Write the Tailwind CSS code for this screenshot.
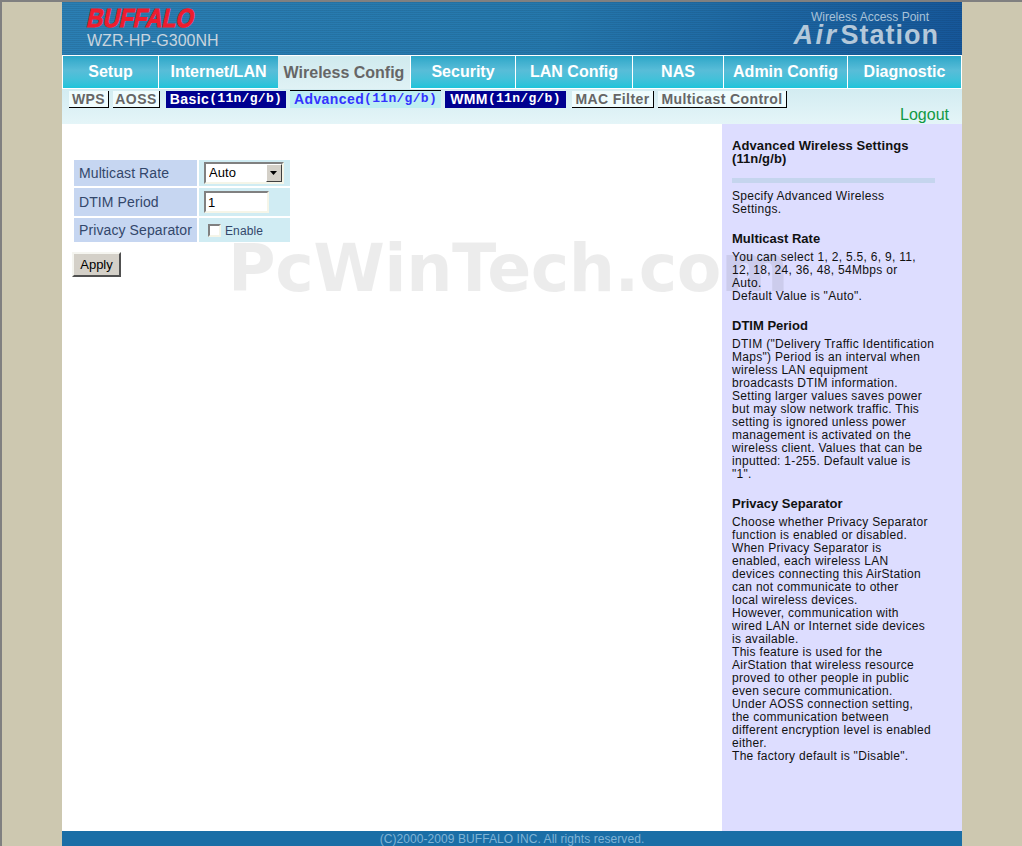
<!DOCTYPE html>
<html lang="en">
<head>
    <meta charset="UTF-8">
    <meta name="viewport" content="width=device-width, initial-scale=1.0">
    <title>AirStation - Advanced Wireless Settings</title>
    <script src="https://cdn.jsdelivr.net/npm/@tailwindcss/browser@4"></script>
</head>
<body class="bg-[#cdc8b0] font-['Liberation_Sans',Arial,sans-serif]">
    <div class="relative h-[846px] overflow-hidden border-t-2 border-l-2 border-[#808080] pl-[60px]">
        <div class="flex h-[844px] w-[900px] flex-col bg-white">

            <!-- Header -->
            <div class="flex h-[53px] justify-between bg-[image:repeating-linear-gradient(0deg,rgba(0,0,0,0.08)_0px,rgba(0,0,0,0.08)_1px,transparent_1px,transparent_2px),linear-gradient(100deg,#2b7fb4,#2578ad_55%,#16579a)]">
                <div class="pl-[26px] pt-[3px]">
                    <div class="h-[24px] origin-left -skew-x-[14deg] scale-x-[0.87] text-[26px] leading-[26px] font-bold text-[#ee1c2e] [-webkit-text-stroke:1px_#ee1c2e]">BUFFALO</div>
                    <div class="-ml-px mt-[3px] text-[16px] leading-[18px] text-[#c8d4de]">WZR-HP-G300NH</div>
                </div>
                <div class="w-[172px] pt-[9px] text-right">
                    <div class="pr-[33px] text-[12px] leading-[13px] text-[#a9c2d8]">Wireless Access Point</div>
                    <div class="-mt-[1px] pr-[23px] text-[27px] leading-[25px] font-bold tracking-[1px] text-[#b4c8da]"><span class="italic tracking-[2.5px]">Air</span><span class="ml-[2px]">Station</span></div>
                </div>
            </div>

            <!-- Main tabs -->
            <div class="flex h-[34px] gap-px border-t border-white bg-white pl-px text-[16px] font-bold text-white">
                <a class="flex h-[32px] w-[95px] items-center justify-center bg-linear-to-b from-[#2aa6c8] via-[#58bdd8] via-45% to-[#1cc4da]">Setup</a>
                <a class="flex h-[32px] w-[119px] items-center justify-center bg-linear-to-b from-[#2aa6c8] via-[#58bdd8] via-45% to-[#1cc4da]">Internet/LAN</a>
                <a class="-ml-px flex h-[33px] w-[132px] items-center justify-center bg-linear-to-b from-[#cfeaee] to-[#e0f2f5] text-[#666666]">Wireless Config</a>
                <a class="flex h-[32px] w-[104px] items-center justify-center bg-linear-to-b from-[#2aa6c8] via-[#58bdd8] via-45% to-[#1cc4da]">Security</a>
                <a class="flex h-[32px] w-[116px] items-center justify-center bg-linear-to-b from-[#2aa6c8] via-[#58bdd8] via-45% to-[#1cc4da]">LAN Config</a>
                <a class="flex h-[32px] w-[90px] items-center justify-center bg-linear-to-b from-[#2aa6c8] via-[#58bdd8] via-45% to-[#1cc4da]">NAS</a>
                <a class="flex h-[32px] w-[123px] items-center justify-center bg-linear-to-b from-[#2aa6c8] via-[#58bdd8] via-45% to-[#1cc4da]">Admin Config</a>
                <a class="flex h-[32px] w-[113px] items-center justify-center bg-linear-to-b from-[#2aa6c8] via-[#58bdd8] via-45% to-[#1cc4da]">Diagnostic</a>
            </div>

            <!-- Sub tabs -->
            <div class="relative h-[35px] bg-linear-to-b from-[#d3ecf1] to-[#e4f5f8]">
                <div class="flex pt-[2px] pl-[7px] text-[14px] leading-[16px] font-bold tracking-[0.4px]">
                    <a class="flex h-[17px] w-[40px] items-center justify-center border-r border-b border-black bg-[#effcfd] pb-px text-[#666666]">WPS</a>
                    <a class="ml-[4px] flex h-[17px] w-[47px] items-center justify-center border-r border-b border-black bg-[#effcfd] pb-px text-[#666666]">AOSS</a>
                    <a class="ml-[6px] flex h-[17px] w-[120px] items-center justify-center bg-[#000090] pb-[2px] text-white">Basic<span class="font-['Liberation_Mono',monospace] text-[13px] tracking-[0.3px]">(11n/g/b)</span></a>
                    <a class="-mt-px ml-[4px] flex h-[18px] w-[151px] items-center justify-center border-t border-black bg-[#bdeef2] pb-[2px] text-[#3333ff]">Advanced<span class="font-['Liberation_Mono',monospace] text-[13px] tracking-[0.3px]">(11n/g/b)</span></a>
                    <a class="ml-[4px] flex h-[17px] w-[121px] items-center justify-center bg-[#000090] pb-[2px] text-white">WMM<span class="font-['Liberation_Mono',monospace] text-[13px] tracking-[0.3px]">(11n/g/b)</span></a>
                    <a class="ml-[6px] flex h-[17px] w-[82px] items-center justify-center border-r border-b border-black bg-[#effcfd] pb-px text-[#666666]">MAC Filter</a>
                    <a class="ml-[4px] flex h-[17px] w-[129px] items-center justify-center border-r border-b border-black bg-[#effcfd] pb-px text-[#666666]">Multicast Control</a>
                </div>
                <a class="absolute right-[13px] bottom-0 text-[16px] leading-[19px] font-normal text-[#119944]">Logout</a>
            </div>

            <!-- Content -->
            <div class="flex flex-1">
                <div class="flex-1 pt-[36px] pl-[10px]">
                    <div class="ml-[2px] flex flex-col gap-[2px] text-[14px] tracking-[0.1px] text-[#33476b]">
                        <div class="flex gap-[2px]">
                            <div class="flex h-[26px] w-[123px] items-center bg-[#c6d6f1] pl-[5px]">Multicast Rate</div>
                            <div class="flex h-[26px] w-[91px] items-center bg-[#d0ecf3] pl-[5px]">
                                <div class="relative flex">
                                    <select class="h-[22px] w-[80px] appearance-none border-2 border-t-[#808080] border-r-[#f5f5e8] border-b-[#f5f5e8] border-l-[#808080] bg-white pl-[3px] text-[13px] leading-[14px] text-black">
                                        <option>Auto</option>
                                    </select>
                                    <div class="absolute top-[2px] right-[2px] flex h-[18px] w-[16px] items-center justify-center border border-t-white border-r-[#404040] border-b-[#404040] border-l-white bg-[#d4d0c8]">
                                        <svg width="8" height="5" viewBox="0 0 8 5"><path d="M0 0h7L3.5 4z" fill="#000"/></svg>
                                    </div>
                                </div>
                            </div>
                        </div>
                        <div class="flex gap-[2px]">
                            <div class="flex h-[28px] w-[123px] items-center bg-[#c6d6f1] pl-[5px]">DTIM Period</div>
                            <div class="flex h-[28px] w-[91px] items-center bg-[#d0ecf3] pl-[5px]">
                                <input type="text" value="1" class="h-[22px] w-[65px] border-2 border-t-[#808080] border-r-[#f5f5e8] border-b-[#f5f5e8] border-l-[#808080] bg-white pl-[2px] text-[13px] text-black">
                            </div>
                        </div>
                        <div class="flex gap-[2px]">
                            <div class="flex h-[24px] w-[123px] items-center bg-[#c6d6f1] pl-[5px]">Privacy Separator</div>
                            <div class="flex h-[24px] w-[91px] items-center bg-[#d0ecf3] pl-[9px] text-[12px]">
                                <span class="h-[13px] w-[13px] border-2 border-t-[#808080] border-r-[#f5f5e8] border-b-[#f5f5e8] border-l-[#808080] bg-white"></span>
                                <span class="mt-[2px] ml-[4px]">Enable</span>
                            </div>
                        </div>
                    </div>
                    <button class="mt-[10px] h-[25px] w-[49px] border-2 border-t-[#f5f5f0] border-r-[#505050] border-b-[#505050] border-l-[#f5f5f0] bg-[#d4d0c8] text-[13px] text-black">Apply</button>
                </div>

                <!-- Help panel -->
                <div class="w-[240px] bg-[#ddddff] pt-[15px] pr-[20px] pl-[10px] text-[12px] leading-[13px] tracking-[0.3px] text-[#111111]">
                    <h2 class="text-[13px] font-bold tracking-[0.1px]">Advanced Wireless Settings<br>(11n/g/b)</h2>
                    <div class="mt-[13px] mr-[7px] h-[5px] bg-[#c5d5ee]"></div>
                    <p class="mt-[7px]">Specify Advanced Wireless<br>Settings.</p>
                    <h3 class="mt-[16px] text-[13px] font-bold tracking-normal">Multicast Rate</h3>
                    <p class="mt-[6px]">You can select 1, 2, 5.5, 6, 9, 11,<br>12, 18, 24, 36, 48, 54Mbps or<br>Auto.<br>Default Value is "Auto".</p>
                    <h3 class="mt-[16px] text-[13px] font-bold tracking-normal">DTIM Period</h3>
                    <p class="mt-[6px]">DTIM ("Delivery Traffic Identification<br>Maps") Period is an interval when<br>wireless LAN equipment<br>broadcasts DTIM information.<br>Setting larger values saves power<br>but may slow network traffic. This<br>setting is ignored unless power<br>management is activated on the<br>wireless client. Values that can be<br>inputted: 1-255. Default value is<br>"1".</p>
                    <h3 class="mt-[16px] text-[13px] font-bold tracking-normal">Privacy Separator</h3>
                    <p class="mt-[6px]">Choose whether Privacy Separator<br>function is enabled or disabled.<br>When Privacy Separator is<br>enabled, each wireless LAN<br>devices connecting this AirStation<br>can not communicate to other<br>local wireless devices.<br>However, communication with<br>wired LAN or Internet side devices<br>is available.<br>This feature is used for the<br>AirStation that wireless resource<br>proved to other people in public<br>even secure communication.<br>Under AOSS connection setting,<br>the communication between<br>different encryption level is enabled<br>either.<br>The factory default is "Disable".</p>
                </div>
            </div>

            <!-- Footer -->
            <div class="h-[15px] bg-[#1a6ea6] text-center text-[12px] leading-[17px] tracking-[0.07px] text-[#80b4d6]">(C)2000-2009 BUFFALO INC. All rights reserved.</div>
        </div>

        <!-- Watermark -->
        <div class="pointer-events-none absolute top-[229px] left-[226px] font-['DejaVu_Sans',sans-serif] text-[65px] leading-[76px] font-bold tracking-[-0.5px] whitespace-nowrap text-black/[0.075]">PcWinTech.com</div>
    </div>
</body>
</html>
